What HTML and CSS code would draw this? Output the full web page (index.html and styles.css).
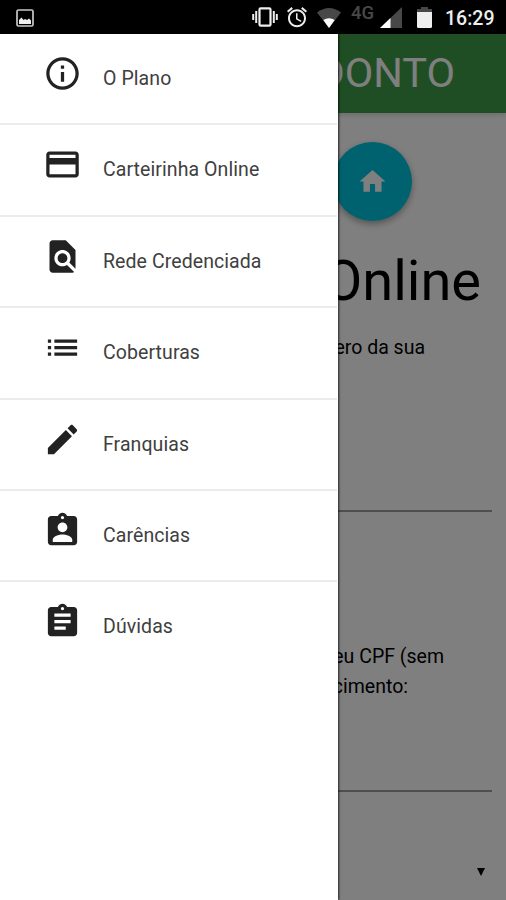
FILE: index.html
```html
<!DOCTYPE html>
<html lang="pt-BR">
<head>
  <meta charset="UTF-8">
  <meta name="viewport" content="width=device-width, initial-scale=1.0">
  <title>Carteirinha Online</title>
  <link rel="stylesheet" href="styles.css">
</head>
<body>
  <!-- Status bar -->
  <div class="status-bar">
    <svg class="st-photo" viewBox="0 0 18 18">
      <rect x="1" y="1" width="16" height="16" rx="1.5" fill="none" stroke="#c8c8c8" stroke-width="1.7"/>
      <path d="M3 15v-4l2.500-2.500 2 2.500 1.500-1 2 1 2-1.500 2 2V15z" fill="#eee"/>
    </svg>
    <div class="status-icons">
      <svg class="st-vibrate" viewBox="0 0 26 20">
        <rect x="7.500" y="1.300" width="11" height="17.400" rx="1.200" fill="none" stroke="#eee" stroke-width="2.200"/>
        <path d="M4.200 4v12M21.800 4v12M1.200 7v6M24.800 7v6" stroke="#eee" stroke-width="2"/>
      </svg>
      <svg class="st-alarm" viewBox="2 2 20 20.5" fill="#eee">
        <path d="M22 5.720l-4.600-3.860-1.290 1.530 4.600 3.860L22 5.720zM7.880 3.390L6.600 1.860 2 5.710l1.290 1.530 4.590-3.850zM12.500 8H11v6l4.750 2.850.750-1.230-4-2.370V8zM12 4c-4.970 0-9 4.030-9 9s4.020 9 9 9c4.970 0 9-4.030 9-9s-4.030-9-9-9zm0 16c-3.870 0-7-3.130-7-7s3.130-7 7-7 7 3.130 7 7-3.130 7-7 7z"/>
      </svg>
      <svg class="st-wifi" viewBox="0 0 24 20">
        <path d="M0 4.500Q12-4.500 24 4.500L12 20z" fill="#484848"/>
        <path d="M6.300 12Q12 8.400 17.700 12L12 20z" fill="#fff"/>
      </svg>
      <span class="st-network">4G</span>
      <svg class="st-signal" viewBox="0 0 22 21">
        <path d="M22 0v21H0z" fill="#484848"/>
        <path d="M10.500 11v10H0z" fill="#fff"/>
      </svg>
      <svg class="st-battery" viewBox="0 0 15 21">
        <path d="M4 0h7v2h4v4H0V2h4z" fill="#484848"/>
        <path d="M0 5h15v14.500q0 1.500-1.500 1.500h-12Q0 21 0 19.500z" fill="#eee"/>
      </svg>
      <span class="st-time">16:29</span>
    </div>
  </div>

  <div class="app">
    <!-- Page content -->
    <main class="page">
      <header class="nav-bar">
        <span class="brand">DONTO</span>
      </header>
      <div class="actions">
        <a href="#" class="btn-floating">
          <svg viewBox="0 0 24 24" fill="currentColor"><path d="M10 20v-6h4v6h5v-8h3L12 3 2 12h3v8z"/></svg>
        </a>
      </div>
      <h2 class="page-title">Online</h2>
      <p class="hint hint-card">ero da sua</p>
      <div class="field field-card"></div>
      <p class="hint hint-cpf">eu CPF (sem</p>
      <p class="hint hint-birth">cimento:</p>
      <div class="field field-birth"></div>
      <div class="select"><span class="caret"></span></div>
    </main>

    <div class="overlay"></div>

    <!-- Side menu -->
    <nav class="side-nav">
      <a href="#" class="item">
        <svg viewBox="0 0 24 24"><path d="M11 17h2v-6h-2v6zm1-15C6.480 2 2 6.480 2 12s4.480 10 10 10 10-4.480 10-10S17.520 2 12 2zm0 18c-4.410 0-8-3.590-8-8s3.590-8 8-8 8 3.590 8 8-3.590 8-8 8zM11 9h2V7h-2v2z"/></svg>
        <span>O Plano</span>
      </a>
      <a href="#" class="item">
        <svg viewBox="0 0 24 24"><path d="M20 4H4c-1.110 0-1.990.890-1.990 2L2 18c0 1.110.890 2 2 2h16c1.110 0 2-.890 2-2V6c0-1.110-.890-2-2-2zm0 14H4v-6h16v6zm0-10H4V6h16v2z"/></svg>
        <span>Carteirinha Online</span>
      </a>
      <a href="#" class="item">
        <svg viewBox="0 0 24 24"><path d="M20 19.590V8l-6-6H6c-1.100 0-1.990.900-1.990 2L4 20c0 1.100.890 2 1.990 2H18c.450 0 .850-.150 1.190-.400l-4.430-4.430c-.800.520-1.740.830-2.760.830-2.760 0-5-2.240-5-5s2.240-5 5-5 5 2.240 5 5c0 1.020-.310 1.960-.830 2.750L20 19.590zM9 13c0 1.660 1.340 3 3 3s3-1.340 3-3-1.340-3-3-3-3 1.340-3 3z"/></svg>
        <span>Rede Credenciada</span>
      </a>
      <a href="#" class="item">
        <svg viewBox="0 0 24 24"><path d="M3 13h2v-2H3v2zm0 4h2v-2H3v2zm0-8h2V7H3v2zm4 4h14v-2H7v2zm0 4h14v-2H7v2zM7 7v2h14V7H7z"/></svg>
        <span>Coberturas</span>
      </a>
      <a href="#" class="item">
        <svg viewBox="0 0 24 24"><path d="M3 17.250V21h3.750L17.810 9.940l-3.750-3.750L3 17.250zM20.710 7.040c.390-.390.390-1.020 0-1.410l-2.340-2.340c-.390-.390-1.020-.390-1.410 0l-1.830 1.830 3.750 3.750 1.830-1.830z"/></svg>
        <span>Franquias</span>
      </a>
      <a href="#" class="item">
        <svg viewBox="0 0 24 24"><path d="M19 3h-4.180C14.400 1.840 13.300 1 12 1c-1.300 0-2.400.840-2.820 2H5c-1.100 0-2 .900-2 2v14c0 1.100.900 2 2 2h14c1.100 0 2-.900 2-2V5c0-1.100-.900-2-2-2zm-7 0c.550 0 1 .450 1 1s-.450 1-1 1-1-.450-1-1 .450-1 1-1zm0 4c1.660 0 3 1.340 3 3s-1.340 3-3 3-3-1.340-3-3 1.340-3 3-3zm6 12H6v-1.400c0-2 4-3.100 6-3.100s6 1.100 6 3.100V19z"/></svg>
        <span>Carências</span>
      </a>
      <a href="#" class="item">
        <svg viewBox="0 0 24 24"><path d="M19 3h-4.180C14.400 1.840 13.300 1 12 1c-1.300 0-2.400.840-2.820 2H5c-1.100 0-2 .900-2 2v14c0 1.100.900 2 2 2h14c1.100 0 2-.900 2-2V5c0-1.100-.900-2-2-2zm-7 0c.550 0 1 .450 1 1s-.450 1-1 1-1-.450-1-1 .450-1 1-1zm2 14H7v-2h7v2zm3-4H7v-2h10v2zm0-4H7V7h10v2z"/></svg>
        <span>Dúvidas</span>
      </a>
    </nav>
  </div>
</body>
</html>
```
FILE: styles.css
```css
* {
  box-sizing: border-box;
}

body {
  display: flex;
  flex-direction: column;
  height: 100vh;
  margin: 0;
  overflow: hidden;
  font-family: Roboto, "Liberation Sans", sans-serif;
}

svg {
  display: block;
  flex: none;
}

/* Status bar */
.status-bar {
  display: flex;
  flex: none;
  justify-content: space-between;
  height: 34px;
  padding: 0 12px 0 16px;
  background: #000;
  color: #eee;
}

.status-icons {
  display: flex;
  align-items: flex-start;
}

.st-photo {width: 18px; height: 18px; margin-top: 9px;}
.st-vibrate {width: 26px; height: 20px; margin: 7px 9px 0 0;}
.st-alarm {width: 20px; height: 21px; margin: 7px 10px 0 0; overflow: visible;}
.st-wifi {width: 24px; height: 20px; margin: 8px 10px 0 0;}
.st-signal {width: 22px; height: 21px; margin: 7px 15px 0 0;}
.st-battery {width: 15px; height: 21px; margin: 7px 13px 0 0;}

.st-network {
  width: 24px;
  margin: 3px 5px 0 0;
  color: #484848;
  font-size: 18.5px;
  font-weight: 500;
  line-height: 20px;
}

.st-time {
  width: 49px;
  margin-top: 7px;
  font-size: 19.5px;
  font-weight: 500;
  line-height: 23px;
  white-space: nowrap;
}

/* Page content */
.app {
  position: relative;
  flex: 1;
  min-height: 0;
}

.page {
  height: 100%;
  background: #fff;
  text-align: right;
}

.nav-bar {
  height: 79px;
  padding-right: 51px;
  background: #3f9c49;
  box-shadow: 0 2px 5px rgba(0, 0, 0, .16);
  color: #fff;
  font-size: 41.5px;
  line-height: 77px;
}

.actions {
  display: flex;
  justify-content: flex-end;
  padding: 29px 94px 0 0;
}

.btn-floating {
  display: flex;
  align-items: center;
  justify-content: center;
  width: 79px;
  height: 79px;
  border-radius: 50%;
  background: #00c4dc;
  box-shadow: 0 3px 7px rgba(0, 0, 0, .35);
  color: #fff;
}

.btn-floating svg {
  width: 31px;
  height: 31px;
}

.page-title {
  margin: 27px 25px 0 0;
  font-size: 56px;
  font-weight: 400;
  line-height: 66px;
}

.hint {
  margin: 0;
  font-size: 19.5px;
  line-height: 30px;
}

.hint-card {margin: 19px 81px 0 0;}
.hint-cpf {margin: 130px 62px 0 0;}
.hint-birth {margin-right: 98px;}

.field {
  margin: 0 14px;
  border-bottom: 2px solid #9e9e9e;
}

.field-card {height: 149px;}
.field-birth {height: 90px;}

.select {
  display: flex;
  justify-content: flex-end;
  padding: 76px 21px 0 0;
}

.caret {
  border: 4px solid transparent;
  border-top: 8px solid #000;
  border-bottom: 0;
}

.overlay {
  position: absolute;
  inset: 0;
  background: rgba(0, 0, 0, .5);
}

/* Side menu */
.side-nav {
  position: absolute;
  top: 0;
  bottom: 0;
  left: 0;
  width: 338px;
  background: #fff;
  box-shadow: 1px 0 2px rgba(0, 0, 0, .7);
}

.item {
  display: flex;
  height: 91.4px;
  margin-right: 1px;
  padding-left: 43px;
  border-bottom: 2px solid #ebebeb;
  color: #404040;
  font-size: 19.5px;
  letter-spacing: .08px;
  line-height: 90px;
  text-decoration: none;
}

.item:last-child {
  border-bottom: 0;
}

.item svg {
  width: 39px;
  height: 39px;
  margin: 20px 21px 0 0;
  fill: #222;
}
```
